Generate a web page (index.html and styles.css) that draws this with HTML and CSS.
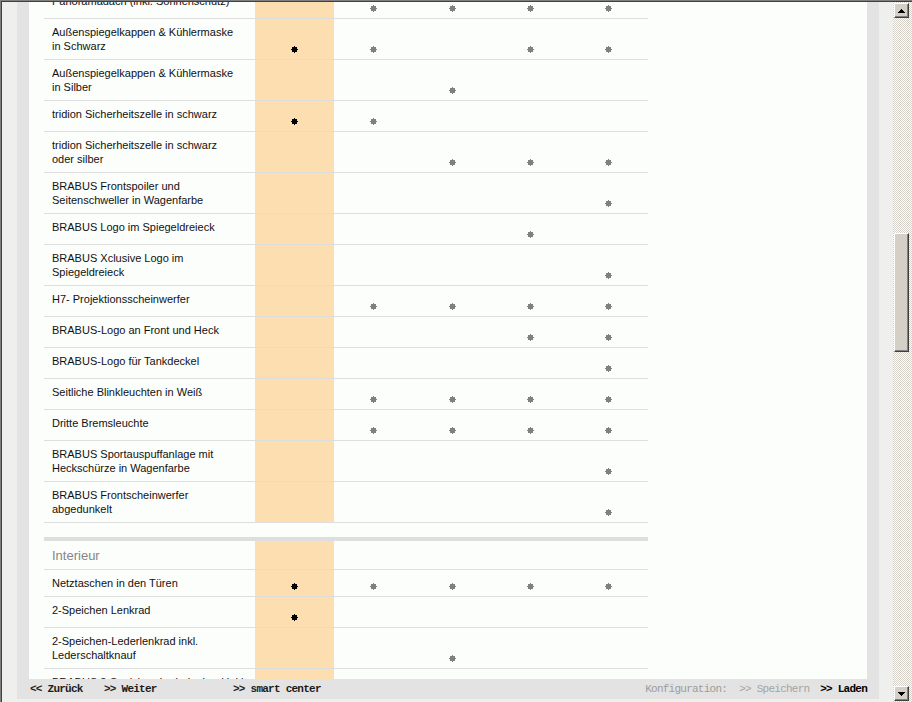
FILE: index.html
```
<!DOCTYPE html>
<html lang="de">
<head>
<meta charset="utf-8">
<title>Ausstattung</title>
<link rel="stylesheet" href="styles.css">
</head>
<body>
<div class="win">
  <div class="frame">
    <div class="main">
      <div class="panel">
        <div class="content">
          <div class="table">
            <div class="row h30"><div class="t">Panoramadach (inkl. Sonnenschutz)</div><div class="c o"></div><div class="c"><i class="s"></i></div><div class="c"><i class="s"></i></div><div class="c"><i class="s"></i></div><div class="c"><i class="s"></i></div></div>
            <div class="row h40"><div class="t">Außenspiegelkappen &amp; Kühlermaske<br>in Schwarz</div><div class="c o"><i class="s k"></i></div><div class="c"><i class="s"></i></div><div class="c"></div><div class="c"><i class="s"></i></div><div class="c"><i class="s"></i></div></div>
            <div class="row h40"><div class="t">Außenspiegelkappen &amp; Kühlermaske<br>in Silber</div><div class="c o"></div><div class="c"></div><div class="c"><i class="s"></i></div><div class="c"></div><div class="c"></div></div>
            <div class="row h30"><div class="t">tridion Sicherheitszelle in schwarz</div><div class="c o"><i class="s k"></i></div><div class="c"><i class="s"></i></div><div class="c"></div><div class="c"></div><div class="c"></div></div>
            <div class="row h40"><div class="t">tridion Sicherheitszelle in schwarz<br>oder silber</div><div class="c o"></div><div class="c"></div><div class="c"><i class="s"></i></div><div class="c"><i class="s"></i></div><div class="c"><i class="s"></i></div></div>
            <div class="row h40"><div class="t">BRABUS Frontspoiler und<br>Seitenschweller in Wagenfarbe</div><div class="c o"></div><div class="c"></div><div class="c"></div><div class="c"></div><div class="c"><i class="s"></i></div></div>
            <div class="row h30"><div class="t">BRABUS Logo im Spiegeldreieck</div><div class="c o"></div><div class="c"></div><div class="c"></div><div class="c"><i class="s"></i></div><div class="c"></div></div>
            <div class="row h40"><div class="t">BRABUS Xclusive Logo im<br>Spiegeldreieck</div><div class="c o"></div><div class="c"></div><div class="c"></div><div class="c"></div><div class="c"><i class="s"></i></div></div>
            <div class="row h30"><div class="t">H7- Projektionsscheinwerfer</div><div class="c o"></div><div class="c"><i class="s"></i></div><div class="c"><i class="s"></i></div><div class="c"><i class="s"></i></div><div class="c"><i class="s"></i></div></div>
            <div class="row h30"><div class="t">BRABUS-Logo an Front und Heck</div><div class="c o"></div><div class="c"></div><div class="c"></div><div class="c"><i class="s"></i></div><div class="c"><i class="s"></i></div></div>
            <div class="row h30"><div class="t">BRABUS-Logo für Tankdeckel</div><div class="c o"></div><div class="c"></div><div class="c"></div><div class="c"></div><div class="c"><i class="s"></i></div></div>
            <div class="row h30"><div class="t">Seitliche Blinkleuchten in Weiß</div><div class="c o"></div><div class="c"><i class="s"></i></div><div class="c"><i class="s"></i></div><div class="c"><i class="s"></i></div><div class="c"><i class="s"></i></div></div>
            <div class="row h30"><div class="t">Dritte Bremsleuchte</div><div class="c o"></div><div class="c"><i class="s"></i></div><div class="c"><i class="s"></i></div><div class="c"><i class="s"></i></div><div class="c"><i class="s"></i></div></div>
            <div class="row h40"><div class="t">BRABUS Sportauspuffanlage mit<br>Heckschürze in Wagenfarbe</div><div class="c o"></div><div class="c"></div><div class="c"></div><div class="c"></div><div class="c"><i class="s"></i></div></div>
            <div class="row h40"><div class="t">BRABUS Frontscheinwerfer<br>abgedunkelt</div><div class="c o"></div><div class="c"></div><div class="c"></div><div class="c"></div><div class="c"><i class="s"></i></div></div>

            <div class="sep"></div>

            <div class="row hd"><div class="t head">Interieur</div><div class="c o"></div><div class="c"></div><div class="c"></div><div class="c"></div><div class="c"></div></div>
            <div class="row h26"><div class="t">Netztaschen in den Türen</div><div class="c o"><i class="s k"></i></div><div class="c"><i class="s"></i></div><div class="c"><i class="s"></i></div><div class="c"><i class="s"></i></div><div class="c"><i class="s"></i></div></div>
            <div class="row h30"><div class="t">2-Speichen Lenkrad</div><div class="c o"><i class="s k"></i></div><div class="c"></div><div class="c"></div><div class="c"></div><div class="c"></div></div>
            <div class="row h40"><div class="t">2-Speichen-Lederlenkrad inkl.<br>Lederschaltknauf</div><div class="c o"></div><div class="c"></div><div class="c"><i class="s"></i></div><div class="c"></div><div class="c"></div></div>
            <div class="row h40"><div class="t">BRABUS 3-Speichen-Lederlenkrad inkl.<br>Schaltwippen</div><div class="c o"></div><div class="c"></div><div class="c"></div><div class="c"></div><div class="c"><i class="s"></i></div></div>
          </div>
        </div>
        <div class="footer">
          <div class="grp">
            <span class="f-back">&lt;&lt; Zurück</span>
            <span class="f-next">&gt;&gt; Weiter</span>
            <span>&gt;&gt; smart center</span>
          </div>
          <div class="grp">
            <span class="f-conf">Konfiguration:</span>
            <span class="f-save">&gt;&gt; Speichern</span>
            <span class="f-load">&gt;&gt; Laden</span>
          </div>
        </div>
      </div>
    </div>
    <div class="sb">
      <div class="btn up"><svg width="7" height="4" viewBox="0 0 7 4" shape-rendering="crispEdges"><polygon points="0,4 7,4 3.5,0" fill="#000"/></svg></div>
      <div class="track"><div class="thumb"></div></div>
      <div class="btn dn"><svg width="7" height="4" viewBox="0 0 7 4" shape-rendering="crispEdges"><polygon points="0,0 7,0 3.5,4" fill="#000"/></svg></div>
    </div>
  </div>
</div>
</body>
</html>
```
FILE: styles.css
```
* { box-sizing: border-box; }
html, body { margin: 0; padding: 0; }
body {
  width: 912px;
  height: 702px;
  overflow: hidden;
  font-family: "Liberation Sans", Arial, sans-serif;
  color: #111;
}
.win {
  width: 912px;
  height: 702px;
  border-top: 1px solid #808080;
  border-left: 1px solid #808080;
}
.frame {
  height: 100%;
  border-top: 1px solid #404040;
  border-left: 1px solid #404040;
  display: flex;
}
.main {
  flex: 1;
  display: flex;
  background: #efefed;
  padding: 0 14px 3px 15px;
}
.panel {
  flex: 1;
  display: flex;
  flex-direction: column;
  background: #e3e3e3;
  padding: 0 12px;
}
.content {
  flex: 1;
  overflow: hidden;
  background: #fcfefc;
  padding-left: 15px;
}
.table {
  width: 604px;
  margin-top: -14px;
}
.row {
  display: grid;
  grid-template-columns: 211px 79px 79px 79px 77px 79px;
  border-bottom: 1px solid #dedede;
}
.h26 { height: 27px; }
.h30 { height: 31px; }
.h40 { height: 41px; }
.hd { height: 29px; }
.t {
  padding: 6px 0 0 8px;
  font-size: 11px;
  line-height: 14px;
  white-space: nowrap;
  color: #111;
}
.t.head {
  padding-top: 7px;
  font-size: 13px;
  line-height: 16px;
  color: #858585;
}
.c {
  display: flex;
  justify-content: center;
  align-items: flex-end;
  padding-bottom: 6px;
}
.c.o { background: #fddeb1; }
.s {
  display: block;
  position: relative;
  width: 5px;
  height: 5px;
  margin: 1px;
  background: #808080;
}
.s::before, .s::after {
  content: "";
  position: absolute;
  background: inherit;
}
.s::before { left: -1px; top: 2px; width: 7px; height: 1px; }
.s::after { left: 2px; top: -1px; width: 1px; height: 7px; }
.s.k { background: #000; }
.sep {
  margin-top: 14px;
  height: 4px;
  background: #dedede;
}
.footer {
  height: 20px;
  display: flex;
  align-items: center;
  justify-content: space-between;
  padding: 0 0 1px 1px;
  font-family: "Liberation Mono", "Courier New", monospace;
  font-size: 11px;
  letter-spacing: -0.75px;
  font-weight: bold;
  color: #1c1c1c;
  white-space: nowrap;
}
.grp { display: flex; }
.f-back { width: 74px; }
.f-next { width: 129px; }
.f-conf { width: 94px; color: #9c9c9c; font-weight: normal; }
.f-save { width: 81px; color: #a4a4a4; font-weight: normal; }
.f-load { color: #000; }
.sb {
  width: 19px;
  display: flex;
  flex-direction: column;
  padding-left: 1px;
  background: repeating-conic-gradient(#d4d0c8 0 25%, #ffffff 0 50%) 0 0 / 2px 2px;
}
.btn, .thumb {
  width: 15px;
  background: #d4d0c8;
  border: 1px solid;
  border-color: #ffffff #404040 #404040 #ffffff;
  box-shadow: inset -1px -1px #808080;
}
.btn {
  height: 15px;
  display: flex;
  align-items: center;
  justify-content: center;
}
.btn svg { display: block; }
.up { margin-top: 1px; }
.dn { margin-bottom: 1px; }
.track { flex: 1; }
.thumb {
  margin-top: 215px;
  height: 119px;
}
```
